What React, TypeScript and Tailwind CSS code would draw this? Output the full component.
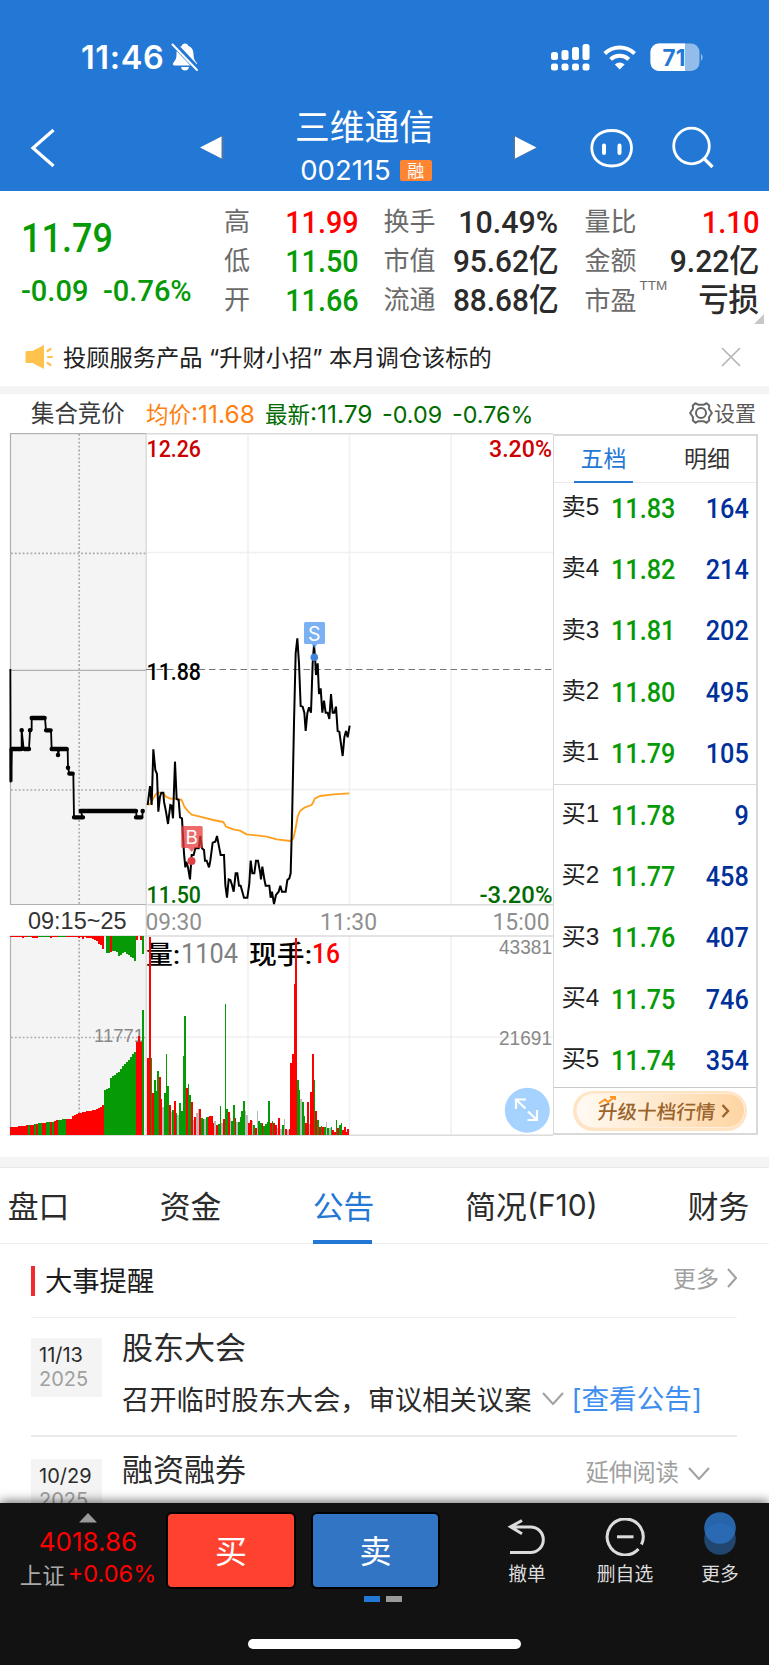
import React from "react";

const RED = "#ff0000";
const GREEN = "#079a07";
const GRAY = "#b9b9b9";
const BAR_COLORS: Record<string, string> = { r: RED, g: GREEN, n: GRAY };

const VOLUME =
  "r475 r112 g473 r580 g540 g573 g513 r530 r597 n622 g580 g462 g558 r615 n635 g630 r603 g640 n645 g610 g633 g468 g348 r565 g552 g585 r606 n660 r652 n640 n627 r626 g654 g657 n657 g651 r652 r648 r648 r668 n662 r675 g672 g617 n670 r656 g312 g628 r636 n655 g663 g615 r654 n665 g665 g652 g632 g604 n632 n645 r670 r660 n663 g675 r685 n632 g662 g670 r670 g678 g672 g665 g603 r668 g662 r668 r675 n685 r653 n688 g675 n656 r688 n690 r688 r490 r462 r253 r115 g540 g570 n598 g605 g648 r670 r605 n672 r577 r462 g540 r632 g660 r682 g678 r680 g682 n665 g684 n685 g682 r690 r695 g660 r685 g676 g670 r690 r682 r695 r688";

const AUCTION_VOLUME =
  "r681 r681 r680 r680 r679 r678 r678 r677 r676 g676 r675 r674 g673 r672 g670 g669 r668 r668 g667 g667 r665 g665 r663 r661 g660 g659 g657 g657 r658 r657 r657 r647 r645 r642 r640 r638 r636 r635 r634 r633 r632 r631 r629 r627 r624 r621 r615 g569 g567 g563 g534 g527 g524 g520 g516 g507 g497 g491 g485 g479 g472 g463 g457 r427 r407 r427 g331";

const AUCTION_TOP =
  "r109 r109 r110 r110 r110 r111 r112 r111 r111 g109 r109 r112 r112 r112 g109 g109 g109 g109 g109 g109 r112 r111 r109 r109 g109 g109 g109 g109 r111 r109 r111 r109 r109 r110 r112 r109 r116 r110 r112 r112 r114 r116 r119 r122 r131 r133 r146 f0 g157 g158 r155 g153 g152 g154 g166 g164 g157 g156 g162 g165 g171 g174 g181 r118 f0 r118 g160";

const PRICE =
  "443,555 450,498 455,555 460,388 466,450 471,462 475,575 480,530 484,518 490,518 492,545 498,575 504,612 511,555 515,557 519,595 525,425 530,537 536,540 540,592 546,595 549,650 552,700 556,742 559,725 564,742 570,778 575,705 581,705 586,685 596,685 601,648 606,685 612,690 615,722 620,722 627,742 631,722 638,668 646,665 651,648 658,685 662,705 672,705 676,795 681,833 686,778 691,780 696,795 701,815 707,760 712,760 717,797 722,797 732,833 742,833 748,790 752,722 757,760 763,760 768,722 774,722 781,760 783,778 787,740 793,778 797,797 808,797 812,833 816,815 822,852 828,825 836,815 841,797 846,815 857,815 862,780 868,775 872,760 876,610 882,310 887,100 892,55 897,130 902,258 908,260 913,278 917,333 922,280 927,262 933,278 938,130 942,75 945,110 948,165 953,130 957,222 962,205 967,278 972,242 977,278 983,278 988,297 993,222 998,278 1003,278 1008,260 1013,333 1018,335 1023,372 1028,408 1033,352 1038,333 1043,352 1049,317";

const AVERAGE =
  "443,555 452,550 460,535 468,522 475,517 490,520 498,530 510,536 530,536 545,540 553,560 565,575 575,584 600,590 640,600 670,606 678,620 700,628 720,632 740,643 800,650 830,658 872,663 880,655 886,630 893,590 900,573 915,562 935,555 945,535 960,528 1000,523 1048,520";

const AUCTION_PRICE =
  "31,147 32,485 35,387 65,387 65,331 71,387 87,387 90,331 95,331 95,294 135,294 138,331 153,331 155,387 174,387 174,405 178,387 203,387 204,443 208,461 220,461 222,592 248,592 242,573 250,573 408,573 410,592 427,592 428,573";

const cjk = "font-['Noto_Sans_CJK_SC',sans-serif]";

function Din({ children, className = "", scale = "scale-x-90" }: { children: React.ReactNode; className?: string; scale?: string }) {
  return (
    <span className={`inline-block whitespace-nowrap font-[Roboto,'Noto_Sans_CJK_SC',sans-serif] font-medium leading-none ${scale} ${className}`}>
      {children}
    </span>
  );
}

function StatusBar() {
  return (
    <div className="flex h-[114px] items-center pl-[81px] pr-[64px] text-white">
      <span className="w-[90px] whitespace-nowrap pt-[2px] font-[Inter,sans-serif] text-[32.5px] font-semibold leading-none tracking-[0.6px]">11:46</span>
      <svg width="28" height="30" viewBox="0 0 28 30" className="shrink-0" fill="#fff">
        <path d="M14 1.4c1.8 0 3 1.1 3.3 2.7 3.6 1.2 5.2 4.3 5.2 8 0 4.900 1.400 6.700 3.200 8.700.9 1.200.4 2.700-1.200 2.700H3.500c-1.600 0-2.100-1.500-1.200-2.700 1.800-2 3.200-3.800 3.200-8.700 0-3.700 1.600-6.800 5.200-8C11 2.500 12.200 1.400 14 1.400zM10 25h8c-.4 2.300-2 3.600-4 3.600S10.400 27.300 10 25z" />
        <path d="M2.500 1.500L27 27.500" stroke="#2478d5" strokeWidth="5.500" />
        <path d="M1.500 2.500L26 28" stroke="#fff" strokeWidth="2" strokeLinecap="round" />
      </svg>
      <div className="flex-1" />
      <svg width="154" height="30" viewBox="551 42 154 30" fill="#fff">
        {[0, 1, 2, 3].map((i) => (
          <g key={i}>
            <rect x={551 + i * 10.5} y={[52, 50, 47, 44][i]} width="7" height={[8, 10, 13, 16][i]} rx="2.500" />
            <rect x={551 + i * 10.5} y="63.500" width="7" height="7" rx="2.500" />
          </g>
        ))}
        <g fill="none" stroke="#fff" strokeWidth="4">
          <path d="M604.800 53.500a21.500 21.500 0 0 1 29.800 0" />
          <path d="M610.600 59.400a13.400 13.400 0 0 1 18.200 0" />
        </g>
        <path d="M619.700 69.500l-4.900-5.100a7.300 7.300 0 0 1 9.800 0z" />
        <rect x="650.500" y="43.500" width="49" height="27.500" rx="8.500" fill="#93bcea" />
        <path d="M659 43.500h26V71h-26a8.500 8.500 0 0 1-8.500-8.500V52a8.500 8.500 0 0 1 8.500-8.500z" />
        <path d="M701 53.500q3.400 3.800 0 7.600z" fill="#93bcea" />
        <text x="662.500" y="65.500" fill="#2478d5" fontFamily="Inter" fontWeight="700" fontSize="22.500" textLength="23">71</text>
      </svg>
    </div>
  );
}

function NavBar() {
  return (
    <div className="flex h-[77px] items-start text-white">
      <svg width="244" height="77" viewBox="0 114 244 77">
        <path d="M53.500 130L33 148 53.500 166" fill="none" stroke="#fff" strokeWidth="3.200" />
        <path d="M223.500 135v25L201.500 147z" fill="#777" opacity=".55" />
        <path d="M221.500 136.500v22L200 147.500z" fill="#fff" />
      </svg>
      <div className={`flex w-[244px] flex-col items-center ${cjk}`}>
        <div className="-mt-[8px] pr-[3px] text-[34.800px] leading-[38px]">三维通信</div>
        <div className="mt-[13px] flex items-center gap-[9px]">
          <span className="font-[Inter,sans-serif] text-[27.500px] leading-[26px]">002115</span>
          <span className="flex h-[21px] w-[32px] items-center justify-center rounded-[2px] bg-[#ff8533] pb-[2px] text-[17px] leading-none">融</span>
        </div>
      </div>
      <svg width="281" height="77" viewBox="488 114 281 77" fill="none" stroke="#fff">
        <path d="M513.500 135v25l23-12z" fill="#777" stroke="none" opacity=".55" />
        <path d="M515 136.500v22l21.500-11z" fill="#fff" stroke="none" />
        <path d="M611.800 130.500c13 0 19.700 8 19.700 17.500s-6.700 18-19.700 18-20-8.500-20-18 7-17.500 20-17.500z" strokeWidth="2.800" />
        <path d="M604 145.500v7.500M619.500 145.500v7.500" strokeWidth="4" strokeLinecap="round" />
        <circle cx="691.500" cy="146" r="17.800" strokeWidth="2.800" />
        <path d="M703.500 158l9 9" strokeWidth="3.200" />
      </svg>
    </div>
  );
}

function Stat({ label, value, color, sup, scale = "scale-x-95" }: { label: string; value: string; color: string; sup?: string; scale?: string }) {
  return (
    <div className="flex h-[39.3px] items-center justify-between">
      <span className={`${cjk} flex text-[26px] leading-none text-[#6b6b6b]`}>
        <span className={sup ? "-mt-[2px]" : "-mt-[4px]"}>{label}</span>
        {sup && <span className="-mt-[9px] ml-[3px] font-['Liberation_Sans',sans-serif] text-[13.500px] leading-none">{sup}</span>}
      </span>
      <Din scale={scale} className={`origin-right text-[32px] ${color}`}>{value}</Din>
    </div>
  );
}

function Quote() {
  const up = "text-[#ff0000]";
  const down = "text-[#079a07]";
  const dark = "text-[#2b2b2b]";
  return (
    <section className="flex h-[137px] shrink-0">
      <div className={`w-[224px] pl-[21px] pt-[28px] ${down}`}>
        <Din className="block origin-left text-[40px]">11.79</Din>
        <div className="mt-[18px] flex">
          <Din scale="scale-x-100" className="w-[82px] text-[29px]">-0.09</Din>
          <Din scale="scale-x-100" className="text-[29px]">-0.76%</Din>
        </div>
      </div>
      <div className="w-[134.500px] pt-[11px]">
        <Stat label="高" value="11.99" color={up} scale="scale-x-90" />
        <Stat label="低" value="11.50" color={down} scale="scale-x-90" />
        <Stat label="开" value="11.66" color={down} scale="scale-x-90" />
      </div>
      <div className="ml-[25px] w-[175px] pt-[11px]">
        <Stat label="换手" value="10.49%" color={dark} />
        <Stat label="市值" value="95.62亿" color={dark} scale="scale-x-[0.93]" />
        <Stat label="流通" value="88.68亿" color={dark} scale="scale-x-[0.93]" />
      </div>
      <div className="ml-[26px] w-[174.500px] pt-[11px]">
        <Stat label="量比" value="1.10" color={up} scale="scale-x-[0.91]" />
        <Stat label="金额" value="9.22亿" color={dark} scale="scale-x-[0.94]" />
        <Stat label="市盈" value="亏损" color={dark} sup="TTM" scale="scale-x-[0.95]" />
      </div>
      <svg width="10" height="10" className="-ml-[5px] mt-[123px] shrink-0">
        <path d="M10 0v10H0z" fill="#c8c8c8" />
      </svg>
    </section>
  );
}

function Notice() {
  return (
    <section className="flex h-[58px] shrink-0 items-center pl-[25px] pr-[28px]">
      <svg width="29" height="26" viewBox="0 0 29 26">
        <path d="M2 7h5.500L19 1v24L7.500 19H2a1.500 1.500 0 0 1-1.500-1.500v-9A1.500 1.500 0 0 1 2 7z" fill="#ffc24d" />
        <path d="M22.500 7l3-2M23 13h4M22.500 19l3 2" stroke="#ffc24d" strokeWidth="2.200" strokeLinecap="round" />
      </svg>
      <span className={`ml-[9px] flex-1 whitespace-nowrap pt-px text-[23.250px] leading-none text-[#222] ${cjk}`}>
        投顾服务产品<span className="font-[Inter,sans-serif]"> “</span>升财小招<span className="font-[Inter,sans-serif]">” </span>本月调仓该标的
      </span>
      <svg width="20" height="20" viewBox="0 0 20 20">
        <path d="M1 1l18 18M19 1L1 19" stroke="#b5b5b5" strokeWidth="1.700" />
      </svg>
    </section>
  );
}

function ChartHeader() {
  return (
    <div className={`flex h-[37px] shrink-0 items-center whitespace-nowrap pl-[31px] pr-[13px] text-[23.400px] leading-none ${cjk}`}>
      <span className="w-[115px] pt-[1px] text-[#3a3a3a]">集合竞价</span>
      <span className="w-[119px] pt-[3px] text-[22.500px] text-[#ff7f0e]">均价<span className="font-[Inter,sans-serif] text-[24.500px]">:11.68</span></span>
      <span className="w-[117px] pt-[3px] text-[22.500px] text-[#006b00]">最新<span className="font-[Inter,sans-serif] text-[24.500px]">:11.79</span></span>
      <span className="w-[70px] pt-[4px] font-[Inter,sans-serif] text-[23.300px] leading-[28px] text-[#006b00]">-0.09</span>
      <span className="flex-1 pt-[4px] font-[Inter,sans-serif] text-[23.300px] leading-[28px] text-[#006b00]">-0.76%</span>
      <svg width="24" height="24" viewBox="0 0 24 24" fill="none" stroke="#666" strokeWidth="2">
        <path d="M6.400 2.200L9 3.700h6l2.600-1.500 2.600 2.200-.2 3.300 2.900 4.300-2.900 4.300.2 3.300-2.600 2.200L15 20.300H9l-2.600 1.500-2.600-2.200.2-3.300L1.100 12 4 7.700l-.2-3.300z" strokeLinejoin="round" />
        <circle cx="12" cy="12" r="5" />
      </svg>
      <span className="ml-px text-[21px] text-[#5a5a5a]">设置</span>
    </div>
  );
}

function Label(props: { x: number; y: number; w: number; size: number; fill: string; children: string; font?: string; weight?: number }) {
  return (
    <text x={props.x} y={props.y} fontSize={props.size} fill={props.fill} fontWeight={props.weight ?? 500} fontFamily={props.font ?? "Roboto, 'Noto Sans CJK SC', sans-serif"} textLength={props.w} lengthAdjust="spacingAndGlyphs">
      {props.children}
    </text>
  );
}

function Chart() {
  return (
    <svg width="553" height="707" viewBox="0 431 553 707" className="shrink-0">
      <rect x="10.500" y="433.500" width="135.500" height="471" fill="#f4f4f4" />
      <rect x="10.500" y="936" width="135.500" height="199" fill="#f4f4f4" />
      <g stroke="#f0f0f0" strokeWidth="1.500">
        <path d="M248 434V904M349.500 434V904M451 434V904M146 552.500H553M146 789.500H553" />
        <path d="M248 936V1135M349.500 936V1135M451 936V1135M146 1037H553" />
      </g>
      <g stroke="#dcdcdc" strokeWidth="1.500">
        <path d="M10 433.800H553M146.200 434V1136M146 904.800H553M10 936H553M10 1135.300H553" />
      </g>
      <g stroke="#b0b0b0" strokeWidth="1.200" fill="none">
        <path d="M146 433.500H10.500V904.500H146M10.500 936V1135.500M10.500 670.300H146" />
        <path d="M79.200 434V904M79.200 936V1135M11 553.300H146M11 790H146M11 1037.500H146" stroke="#aaa" strokeWidth="1.700" strokeDasharray="1.800 2.100" />
      </g>
      <path d="M146 669.500H553" stroke="#777" strokeWidth="1.200" strokeDasharray="6.500 4" />

      <Label x={94} y={1042} w={50} size={19} weight={400} fill="#888" font="Liberation Sans">11771</Label>
      <Label x={146} y={963.500} w={34} size={26} fill="#000">量:</Label>
      <Label x={181} y={963} w={57} size={27} weight={400} fill="#808080">1104</Label>
      <Label x={249} y={963.500} w={63} size={26} fill="#000">现手:</Label>
      <Label x={312} y={963} w={28} size={27} fill="#ff0000">16</Label>

      <g transform="translate(0 900) scale(.33333)" shapeRendering="crispEdges">
        {VOLUME.split(" ").map((b, i) => (
          <rect key={i} x={441.5 + i * 5.05} y={+b.slice(1)} width={5.05} height={705 - +b.slice(1)} fill={BAR_COLORS[b[0]]} />
        ))}
        {AUCTION_VOLUME.split(" ").map((b, i) => (
          <rect key={i} x={31 + i * 6} y={+b.slice(1)} width={6} height={705 - +b.slice(1)} fill={BAR_COLORS[b[0]]} />
        ))}
        {AUCTION_TOP.split(" ").map((b, i) =>
          b[0] === "f" ? null : <rect key={i} x={31 + i * 6} y={107} width={6} height={+b.slice(1) - 106} fill={BAR_COLORS[b[0]]} />
        )}
      </g>

      <g transform="translate(0 620) scale(.33333)" fill="none" strokeLinejoin="round">
        <polyline points={AVERAGE} stroke="#ffa01e" strokeWidth="5.500" />
        <polyline points={PRICE} stroke="#000" strokeWidth="6" strokeLinejoin="miter" strokeMiterlimit="3" />
        <polyline points={AUCTION_PRICE} stroke="#000" strokeWidth="5.500" />
        <path d="M35 387H64M74 387H87M95 294H134M138 331H152M155 387H200M208 461H218M222 592H249M242 573H408M408 592H424" stroke="#000" strokeWidth="13" strokeLinecap="round" />
        <path d="M65 331h0.100M90 331h0.100M174 405h0.100M204 443h0.100M428 573h0.100" stroke="#000" strokeWidth="13.500" strokeLinecap="round" />
        <path d="M33 387V485" stroke="#000" strokeWidth="9" />
      </g>

      <path d="M305.500 622h18a1.500 1.500 0 0 1 1.500 1.500v19a1.500 1.500 0 0 1-1.500 1.500h-6l-3 4-3-4h-6a1.500 1.500 0 0 1-1.500-1.500v-19a1.500 1.500 0 0 1 1.500-1.500z" fill="#4f96ee" opacity=".75" />
      <circle cx="314.300" cy="657.300" r="3.800" fill="#3f85dc" />
      <text x="314.300" y="640.500" textAnchor="middle" fontFamily="Inter" fontSize="19.500" fill="#fff">S</text>
      <path d="M182.700 826h18.500a1.500 1.500 0 0 1 1.500 1.500v19a1.500 1.500 0 0 1-1.500 1.500H195l-3.300 4-3.300-4h-5.700a1.500 1.500 0 0 1-1.500-1.500v-19a1.500 1.500 0 0 1 1.500-1.500z" fill="#e8393b" opacity=".75" />
      <circle cx="191.500" cy="861" r="4" fill="#e04045" />
      <text x="191.700" y="843.500" textAnchor="middle" fontFamily="Inter" fontSize="19" fill="#fff">B</text>

      <Label x={146.500} y={457} w={54.500} size={24} fill="#cc0000">12.26</Label>
      <Label x={489} y={457} w={63} size={24} fill="#cc0000">3.20%</Label>
      <Label x={146.500} y={680} w={54.500} size={24} fill="#000">11.88</Label>
      <Label x={146.500} y={903} w={54.500} size={24} fill="#006b00">11.50</Label>
      <Label x={479.500} y={903} w={73} size={24} fill="#006b00">-3.20%</Label>
      <Label x={28} y={929} w={98.500} size={24} weight={400} fill="#333" font="Liberation Sans">09:15~25</Label>
      <Label x={145.500} y={929.500} w={56.500} size={24} weight={400} fill="#8f8f8f">09:30</Label>
      <Label x={320} y={929.500} w={57} size={24} weight={400} fill="#8f8f8f">11:30</Label>
      <Label x={492.500} y={929.500} w={57} size={24} weight={400} fill="#8f8f8f">15:00</Label>
      <Label x={499} y={954} w={53} size={19.5} weight={400} fill="#888" font="Liberation Sans">43381</Label>
      <Label x={499} y={1045} w={53} size={19.5} weight={400} fill="#888" font="Liberation Sans">21691</Label>

      <circle cx="527.300" cy="1110.300" r="22.500" fill="#a6d2ff" />
      <path d="M516 1109v-9.500h10M516.500 1100l9 8.500M527.500 1120H537v-10M528 1111.500l8.500 8" fill="none" stroke="#fff" strokeWidth="2.200" />
    </svg>
  );
}

const ORDERS: [string, string, string][] = [
  ["卖5", "11.83", "164"],
  ["卖4", "11.82", "214"],
  ["卖3", "11.81", "202"],
  ["卖2", "11.80", "495"],
  ["卖1", "11.79", "105"],
  ["买1", "11.78", "9"],
  ["买2", "11.77", "458"],
  ["买3", "11.76", "407"],
  ["买4", "11.75", "746"],
  ["买5", "11.74", "354"],
];

function OrderRow({ row }: { row: [string, string, string] }) {
  return (
    <div className="flex h-[61.300px] items-center pl-[7.500px] pr-[7px]">
      <span className="mb-[3px] w-[49px] whitespace-nowrap font-['Liberation_Sans','Noto_Sans_CJK_SC',sans-serif] text-[24.300px] leading-none text-[#222]">{row[0]}</span>
      <Din className="flex-1 origin-left text-[28px] text-[#079a07]">{row[1]}</Din>
      <Din className="origin-right text-[28px] text-[#00309a]">{row[2]}</Din>
    </div>
  );
}

function OrderBook() {
  return (
    <div className={`mt-[3px] flex h-[701px] w-[205px] flex-col border-2 border-l-[1.500px] border-[#d9d9d9] ${cjk}`}>
      <div className="flex h-[47px] shrink-0 border-b border-[#eaeaea] text-[23px] leading-none">
        <div className="ml-[20px] flex h-[47px] w-[59px] items-center justify-center border-b-2 border-[#2478d5] pb-[3px] text-[#2478d5]">五档</div>
        <div className="ml-[51px] flex w-[46px] items-center pb-[3px] text-[#333]">明细</div>
      </div>
      <div className="-mt-[5px] h-[306px]">{ORDERS.slice(0, 5).map((r) => <OrderRow key={r[0]} row={r} />)}</div>
      <div className="h-[303px] border-t border-[#d9d9d9]">
        {ORDERS.slice(5).map((r) => <OrderRow key={r[0]} row={r} />)}
      </div>
      <div className="flex flex-1 items-center justify-end border-t border-[#c9c9c9] pr-[9px]">
        <div className="flex h-[40px] w-[174px] items-center rounded-full bg-[#ffe4c4] p-[2.500px]">
          <div className="flex h-full w-full items-center justify-center rounded-full border border-[#ffeedd] bg-linear-to-r from-[#fffaf4] to-[#fed5a2] pl-[8px] text-[19.600px] font-medium leading-none text-[#9a642c]">
            <svg width="18" height="9" viewBox="0 0 18 9" className="-mr-[18px] mb-[20px] shrink-0" fill="none" stroke="#ff9420" strokeWidth="2">
              <path d="M1 7.500l6-4 3 2.500 6-4.500M12 1h5v3" />
            </svg>
            <span className="-skew-x-6 whitespace-nowrap">升级十档行情</span>
            <svg width="9" height="14" viewBox="0 0 9 14" className="ml-[5px] shrink-0" fill="none" stroke="#9a642c" strokeWidth="2.400">
              <path d="M1.500 1l5.500 6-5.500 6" />
            </svg>
          </div>
        </div>
      </div>
    </div>
  );
}

function Tabs() {
  const tabs: [string, string][] = [
    ["盘口", "w-[61px] ml-[8px]"],
    ["资金", "w-[61px] ml-[91px]"],
    ["公告", "w-[61px] ml-[92px]"],
    ["简况(F10)", "w-[133px] ml-[91px]"],
    ["财务", "w-[61px] ml-[90px]"],
  ];
  return (
    <nav className={`flex h-[76px] shrink-0 border-b border-[#eeeeee] text-[30.800px] leading-none text-[#2b2b2b] ${cjk}`}>
      {tabs.map(([t, w]) => (
        <div key={t} className={`flex shrink-0 flex-col items-center justify-between whitespace-nowrap pt-[22px] ${w} ${t === "公告" ? "text-[#2478d5]" : ""}`}>
          <span className="flex items-center">
            {t.slice(0, 2)}
            {t.length > 2 && <span className="font-[Inter,sans-serif] text-[30px]">{t.slice(2)}</span>}
          </span>
          {t === "公告" && <span className="-mb-px h-[4px] w-[59px] -translate-x-px bg-[#2478d5]" />}
        </div>
      ))}
    </nav>
  );
}

function Chevron({ right = false }: { right?: boolean }) {
  return right ? (
    <svg width="10" height="20" viewBox="0 0 10 20" fill="none" stroke="#a0a0a0" strokeWidth="2"><path d="M1 1l8 9-8 9" /></svg>
  ) : (
    <svg width="22" height="13" viewBox="0 0 22 13" fill="none" stroke="#a0a0a0" strokeWidth="2" className="shrink-0"><path d="M1 1l10 11L21 1" /></svg>
  );
}

function DateBox({ day, className }: { day: string; className: string }) {
  return (
    <div className={`flex h-[59px] w-[71px] shrink-0 flex-col bg-[#f4f4f4] pl-[8px] pt-[6px] font-[Inter,sans-serif] text-[20px] leading-[23.500px] text-[#2b2b2b] ${className}`}>
      <span>{day}</span>
      <span className="text-[#a0a0a0]">2025</span>
    </div>
  );
}

function Events() {
  return (
    <section className={`flex h-[259px] shrink-0 flex-col overflow-hidden pl-[31px] pr-[32px] leading-none ${cjk}`}>
      <div className="flex h-[74px] shrink-0 items-center border-b-[1.500px] border-[#eeeeee]">
        <span className="h-[30px] w-[4px] bg-[#f22c2c]" />
        <span className="ml-[10px] flex-1 pb-px text-[27.300px] text-[#1c1c1c]">大事提醒</span>
        <span className="mb-[6px] mr-[8px] text-[23px] text-[#a0a0a0]">更多</span>
        <span className="mb-[6px]"><Chevron right /></span>
      </div>
      <div className="flex h-[119px] shrink-0 border-b-2 border-[#eaeaea]">
        <DateBox day="11/13" className="mt-[20px]" />
        <div className="ml-[20px] whitespace-nowrap text-[#2b2b2b]">
          <div className="mt-[12px] text-[31px]">股东大会</div>
          <div className="mt-[23px] flex items-center text-[27.300px]">
            召开临时股东大会，审议相关议案
            <span className="ml-[11px]"><Chevron /></span>
            <span className="ml-[7px] mt-[2px] font-[Inter,'Noto_Sans_CJK_SC',sans-serif] text-[27.600px] text-[#3f8ff0]">[查看公告]</span>
          </div>
        </div>
      </div>
      <div className="flex h-[119px] shrink-0">
        <DateBox day="10/29" className="mt-[22px]" />
        <span className="ml-[20px] mt-[15px] flex-1 text-[31px] text-[#2b2b2b]">融资融券</span>
        <span className="mt-[23px] text-[23.400px] text-[#a0a0a0]">延伸阅读</span>
        <span className="ml-[9px] mr-[27px] mt-[30px]"><Chevron /></span>
      </div>
    </section>
  );
}

function BottomBar() {
  return (
    <footer className={`flex h-[162px] shrink-0 flex-col bg-[#121212] leading-none shadow-[0_-2px_10px_rgba(0,0,0,0.55)] ${cjk}`}>
      <div className="flex h-[93px]">
        <div className="flex w-[168px] shrink-0 flex-col items-center pl-[8px] pt-[10px] font-[Inter,sans-serif] text-[26px] text-[#ff0000]">
          <svg width="18" height="10"><path d="M9 0l9 9.500H0z" fill="#999" /></svg>
          <span className="mt-[6px]">4018.86</span>
          <span className="mt-[7px] flex items-center whitespace-nowrap text-[23.500px]">
            <span className={`mr-[3px] text-[22.500px] text-[#a8a8a8] ${cjk}`}>上证</span>+0.06%
          </span>
        </div>
        <div className="mt-[11px] flex h-[73px] w-[126px] shrink-0 items-center justify-center rounded-[4px] bg-[#ff4230] pb-[4px] text-[32px] text-white ring-2 ring-black">买</div>
        <div className="ml-[19px] mt-[11px] flex h-[73px] w-[125px] shrink-0 items-center justify-center rounded-[4px] bg-[#3275c4] pb-[4px] text-[32px] text-white ring-2 ring-black">卖</div>
        <div className="ml-[59px] flex w-[60px] flex-col items-center pt-[15px] text-[18.800px] text-[#dcdcdc]">
          <svg width="40" height="38" viewBox="509 1517 40 38" fill="none" stroke="#dcdcdc" strokeWidth="3">
            <path d="M512 1551.500h20.500a12.800 12.800 0 0 0 0-25.600H513M524 1519.500l-11.500 6.300 11.500 7" />
          </svg>
          <span className="mt-[8px]">撤单</span>
        </div>
        <div className="ml-[31px] flex w-[74px] flex-col items-center pt-[15px] text-[18.800px] text-[#dcdcdc]">
          <svg width="40" height="38" viewBox="605 1517 40 38" fill="none" stroke="#dcdcdc" strokeWidth="3">
            <path d="M638.500 1548a18 18 0 1 1 3-4.500" />
            <path d="M617 1535.800h16.500" />
          </svg>
          <span className="mt-[8px] whitespace-nowrap">删自选</span>
        </div>
        <div className="ml-[31px] flex w-[54px] flex-col items-center pt-[9px] text-[18.800px] text-[#dcdcdc]">
          <svg width="34" height="44" viewBox="0 0 34 44">
            <circle cx="17" cy="27" r="15.800" fill="#21466f" />
            <circle cx="17" cy="16" r="15.800" fill="#2b6fbf" opacity=".88" />
          </svg>
          <span className="mt-[8px]">更多</span>
        </div>
      </div>
      <div className="ml-[364px] flex gap-[6px]">
        <span className="h-[6px] w-[16px] bg-[#2478d5]" />
        <span className="h-[6px] w-[16px] bg-[#999]" />
      </div>
      <div className="ml-[248px] mt-[37px] h-[10px] w-[273px] rounded-full bg-white" />
    </footer>
  );
}

export default function App() {
  return (
    <main className="flex h-[1665px] w-[769px] flex-col overflow-hidden bg-white">
      <header className="h-[191px] shrink-0 bg-[#2478d5]">
        <StatusBar />
        <NavBar />
      </header>
      <Quote />
      <Notice />
      <div className="h-[8px] shrink-0 bg-[#f4f4f4]" />
      <ChartHeader />
      <div className="flex h-[726px] shrink-0">
        <Chart />
        <OrderBook />
      </div>
      <div className="h-[11px] shrink-0 border-b border-[#e8e8e8] bg-[#f4f4f4]" />
      <Tabs />
      <Events />
      <BottomBar />
    </main>
  );
}
